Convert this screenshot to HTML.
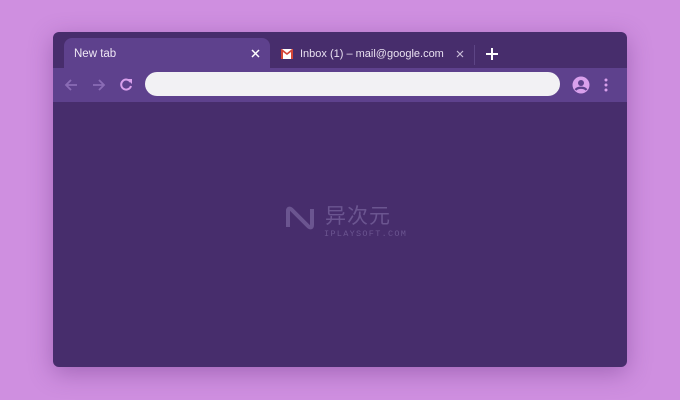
<!DOCTYPE html>
<html><head><style>
body{margin:0;width:680px;height:400px;background:#cf8fe0;font-family:"Liberation Sans","Noto Sans CJK SC",sans-serif;overflow:hidden;position:relative}
.win{position:absolute;left:53px;top:32px;width:574px;height:335px;background:#472d6c;border-radius:6px;overflow:hidden;box-shadow:0 6px 24px rgba(80,30,110,.35)}
.tab{position:absolute;left:11px;top:6px;width:206px;height:30px;background:#5e418d;border-radius:8px 8px 0 0}
.tb{position:absolute;left:0;top:36px;width:574px;height:34px;background:#5e418d}
.t{position:absolute;color:#fff;font-size:12px;white-space:nowrap;line-height:14px}
.omni{position:absolute;left:92px;top:4px;width:415px;height:24px;background:#f2f1f4;border-radius:12px}
</style></head><body>
<div class="win">
<div class="tab"></div>
<div class="t" style="left:21px;top:15px;color:#efe8f5;font-size:11.5px">New tab</div>
<svg style="position:absolute;left:198px;top:17px" width="9" height="9"><path d="M1 1l7 7M8 1L1 8" stroke="#fff" stroke-width="1.5"/></svg>
<svg style="position:absolute;left:228px;top:17px" width="12" height="10" viewBox="0 0 12 10"><rect width="12" height="10" fill="#fff"/><path d="M0 0v10h2V3l4 3 4-3v7h2V0h-1L6 4 1 0z" fill="#d44638"/></svg>
<div class="t" style="left:247px;top:15px;color:#e8e0f0;font-size:11px">Inbox (1) – mail@google.com</div>
<svg style="position:absolute;left:403px;top:18px" width="8" height="8"><path d="M1 1l6 6M7 1L1 7" stroke="#c9bcd8" stroke-width="1.2"/></svg>
<div style="position:absolute;left:421px;top:13px;width:1px;height:20px;background:#5d4585"></div>
<svg style="position:absolute;left:433px;top:16px" width="12" height="12"><path d="M6 0v12M0 6h12" stroke="#fff" stroke-width="2"/></svg>
<div class="tb">
<svg style="position:absolute;left:10px;top:9px" width="16" height="16" viewBox="0 0 16 16"><path d="M14 8H3M8 3L3 8l5 5" stroke="#8a6cb5" stroke-width="1.8" fill="none"/></svg>
<svg style="position:absolute;left:38px;top:9px" width="16" height="16" viewBox="0 0 16 16"><path d="M2 8h11M8 3l5 5-5 5" stroke="#8a6cb5" stroke-width="1.8" fill="none"/></svg>
<svg style="position:absolute;left:65px;top:9px" width="16" height="16" viewBox="0 0 16 16"><path d="M12.5 5A5 5 0 1 0 13 9" stroke="#d9a0ec" stroke-width="2" fill="none"/><path d="M9 2h5v5z" fill="#d9a0ec"/></svg>
<div class="omni"></div>
<svg style="position:absolute;left:519px;top:8px" width="18" height="18" viewBox="0 0 18 18"><circle cx="9" cy="9" r="8.5" fill="#d9a0ec"/><circle cx="9" cy="7" r="3" fill="#5e418d"/><path d="M3.5 14c2-3 9-3 11 0" stroke="#5e418d" stroke-width="2.2" fill="none"/></svg>
<svg style="position:absolute;left:551px;top:9px" width="4" height="16"><circle cx="2" cy="3" r="1.5" fill="#d9a0ec"/><circle cx="2" cy="8" r="1.5" fill="#d9a0ec"/><circle cx="2" cy="13" r="1.5" fill="#d9a0ec"/></svg>
</div>
<svg style="position:absolute;left:231px;top:174px" width="32" height="24" viewBox="0 0 32 24"><path d="M4 21V5c0-3 2-3 4-1l16 16c2 2 4 2 4-1V3" stroke="#6b5590" stroke-width="4" fill="none"/></svg>
<div class="t" style="left:272px;top:173px;font-size:21px;line-height:24px;color:#6b5590;letter-spacing:1px">异次元</div>
<div class="t" style="left:271px;top:197px;font-size:8.5px;line-height:10px;color:#6b5590;letter-spacing:1.3px;font-family:'Liberation Mono',monospace">IPLAYSOFT.COM</div>
</div>
</body></html>
